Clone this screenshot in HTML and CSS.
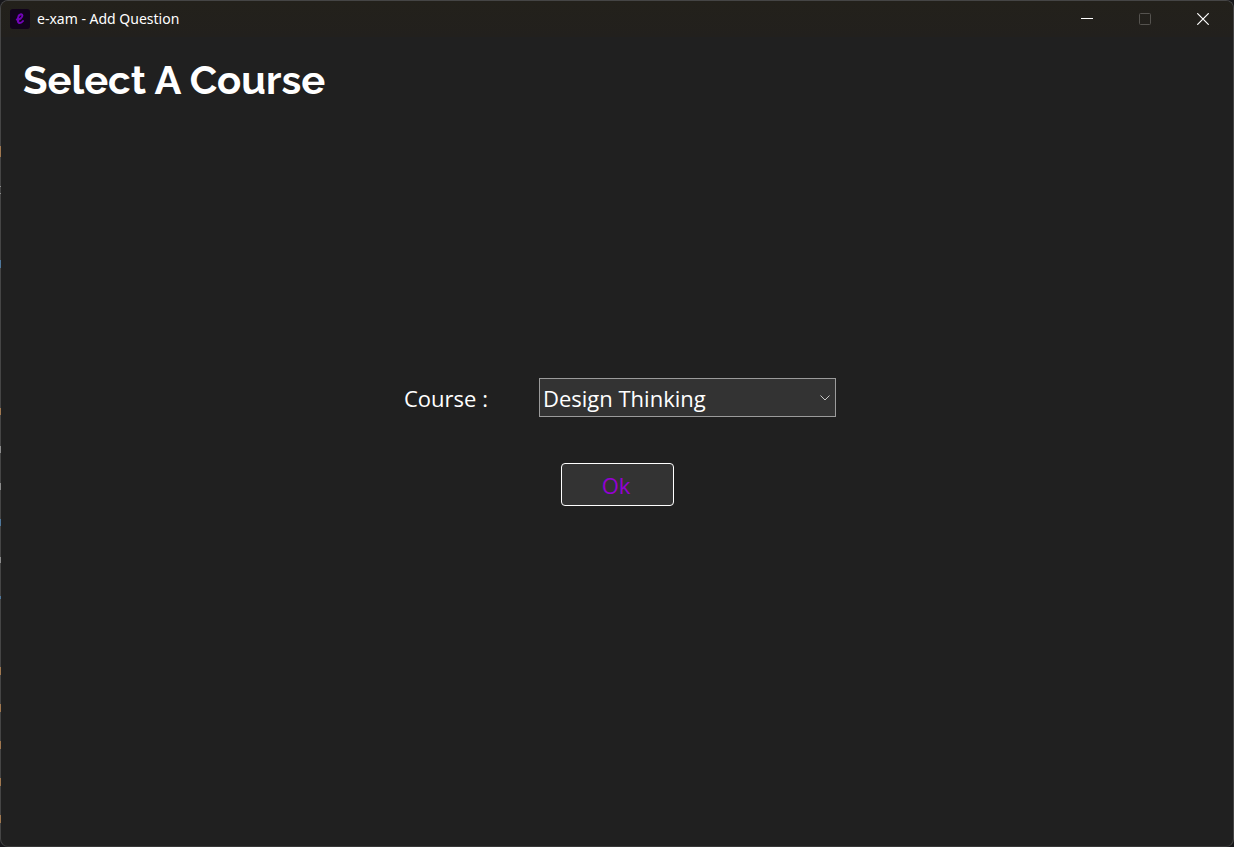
FILE: index.html
```html
<!DOCTYPE html>
<html lang="en">
<head>
<meta charset="utf-8">
<title>e-xam - Add Question</title>
<link rel="stylesheet" href="styles.css">
</head>
<body>
<div class="window">
  <header class="titlebar">
    <svg class="app-icon" viewBox="0 0 20 20" aria-hidden="true">
      <rect width="20" height="20" rx="3" fill="#12031b"/>
      <path d="M6.8 10.6C9 10.8 12.6 9 12.4 6.4C12.1 4.4 8.6 5.3 8.2 8C7.9 9.4 8.2 9.8 7.9 11C7.6 14.8 11 14.6 13 12" fill="none" stroke="#7203b8" stroke-width="2" stroke-linecap="round"/>
    </svg>
    <span class="caption">e-xam - Add Question</span>
    <div class="controls">
      <button class="control" type="button" aria-label="Minimize">
        <svg viewBox="0 0 12 12"><path d="M0 5.5H12"/></svg>
      </button>
      <button class="control" type="button" aria-label="Maximize" disabled>
        <svg viewBox="0 0 12 12"><rect x=".5" y=".5" width="11" height="11" rx="1"/></svg>
      </button>
      <button class="control" type="button" aria-label="Close">
        <svg viewBox="0 0 12 12"><path stroke-width="1.2" d="M.3 .3L11.7 11.7M11.7 .3L.3 11.7"/></svg>
      </button>
    </div>
  </header>
  <h1 class="heading">Select A Course</h1>
  <form class="form">
    <div class="field">
      <label class="label" for="course">Course :</label>
      <div class="combo">
        <select class="select" id="course"><option>Design Thinking</option></select>
        <svg class="chevron" viewBox="0 0 10 6" aria-hidden="true"><path d="M.5 .5L5 5L9.5 .5"/></svg>
      </div>
    </div>
    <button class="ok" type="button">Ok</button>
  </form>
</div>
</body>
</html>
```
FILE: styles.css
```css
* {
  box-sizing: border-box;
}

body {
  margin: 0;
  min-height: 100vh;
  display: flex;
  position: relative;
  background: #17171a;
  color: #fff;
  font-family: "Open Sans", "Noto Sans", sans-serif;
}

/* slivers of the window behind, visible along the left edge */
body::before {
  content: "";
  position: absolute;
  z-index: 1;
  left: 0;
  top: 0;
  bottom: 0;
  width: 1px;
  background:
    linear-gradient(#a07850, #a07850) 0 146px / 1px 11px,
    linear-gradient(#8c8c8c, #8c8c8c) 0 186px / 1px 1px,
    linear-gradient(#8c8c8c, #8c8c8c) 0 193px / 1px 1px,
    linear-gradient(#4f789c, #4f789c) 0 260px / 1px 8px,
    linear-gradient(#a07850, #a07850) 0 408px / 1px 7px,
    linear-gradient(#8c8c8c, #8c8c8c) 0 446px / 1px 7px,
    linear-gradient(#8c8c8c, #8c8c8c) 0 483px / 1px 7px,
    linear-gradient(#4f789c, #4f789c) 0 519px / 1px 7px,
    linear-gradient(#8c8c8c, #8c8c8c) 0 557px / 1px 6px,
    linear-gradient(#4f789c, #4f789c) 0 596px / 1px 3px,
    linear-gradient(#a07850, #a07850) 0 667px / 1px 8px,
    linear-gradient(#a07850, #a07850) 0 704px / 1px 8px,
    linear-gradient(#a07850, #a07850) 0 741px / 1px 8px,
    linear-gradient(#a07850, #a07850) 0 778px / 1px 8px,
    linear-gradient(#a07850, #a07850) 0 815px / 1px 8px;
  background-repeat: no-repeat;
}

.window {
  flex: 1;
  display: flex;
  flex-direction: column;
  border: 1px solid #454545;
  border-bottom-color: #383838;
  border-radius: 8px;
  overflow: hidden;
  background: #202020;
}

.titlebar {
  display: flex;
  align-items: center;
  height: 36px;
  padding-left: 9px;
  background: linear-gradient(#23211b, #22201d);
}

.app-icon {
  width: 20px;
  height: 20px;
}

.caption {
  flex: 1;
  margin-left: 7px;
  font-family: "Noto Sans", "Open Sans", sans-serif;
  font-size: 14px;
  line-height: 20px;
}

.controls {
  display: flex;
  height: 100%;
  padding-right: 1px;
}

.control {
  display: grid;
  place-items: center;
  width: 58px;
  padding: 0;
  border: 0;
  background: none;
  color: #fff;
}

.control:disabled {
  color: #55534f;
}

.control svg {
  width: 12px;
  height: 12px;
  fill: none;
  stroke: currentColor;
}

.heading {
  margin: 18px 22px 0;
  font-family: Raleway, Lato, sans-serif;
  font-size: 40px;
  line-height: 50px;
  font-weight: 700;
}

.form {
  flex: 1;
  display: flex;
  flex-direction: column;
  align-items: center;
  gap: 46px;
  padding: 273px 16px 0;
}

.field {
  display: flex;
  align-items: center;
  width: 438px;
  max-width: 100%;
}

.label {
  width: 141px;
  padding-left: 6px;
  font-size: 22px;
  line-height: 30px;
}

.combo {
  flex: 1;
  position: relative;
}

.select {
  display: block;
  width: 100%;
  height: 39px;
  padding: 0 24px 0 3px;
  border: 1px solid #9b9b9b;
  border-radius: 0;
  appearance: none;
  background: #333;
  color: #fff;
  font: inherit;
  font-size: 22px;
}

.chevron {
  position: absolute;
  right: 6px;
  top: 17px;
  width: 10px;
  height: 6px;
  fill: none;
  stroke: #c8c8c8;
  pointer-events: none;
}

.ok {
  width: 113px;
  height: 43px;
  padding: 0 2px 0 0;
  border: 1px solid #fff;
  border-radius: 4px;
  background: #333;
  color: #9400d3;
  font: inherit;
  font-size: 22px;
}
```
